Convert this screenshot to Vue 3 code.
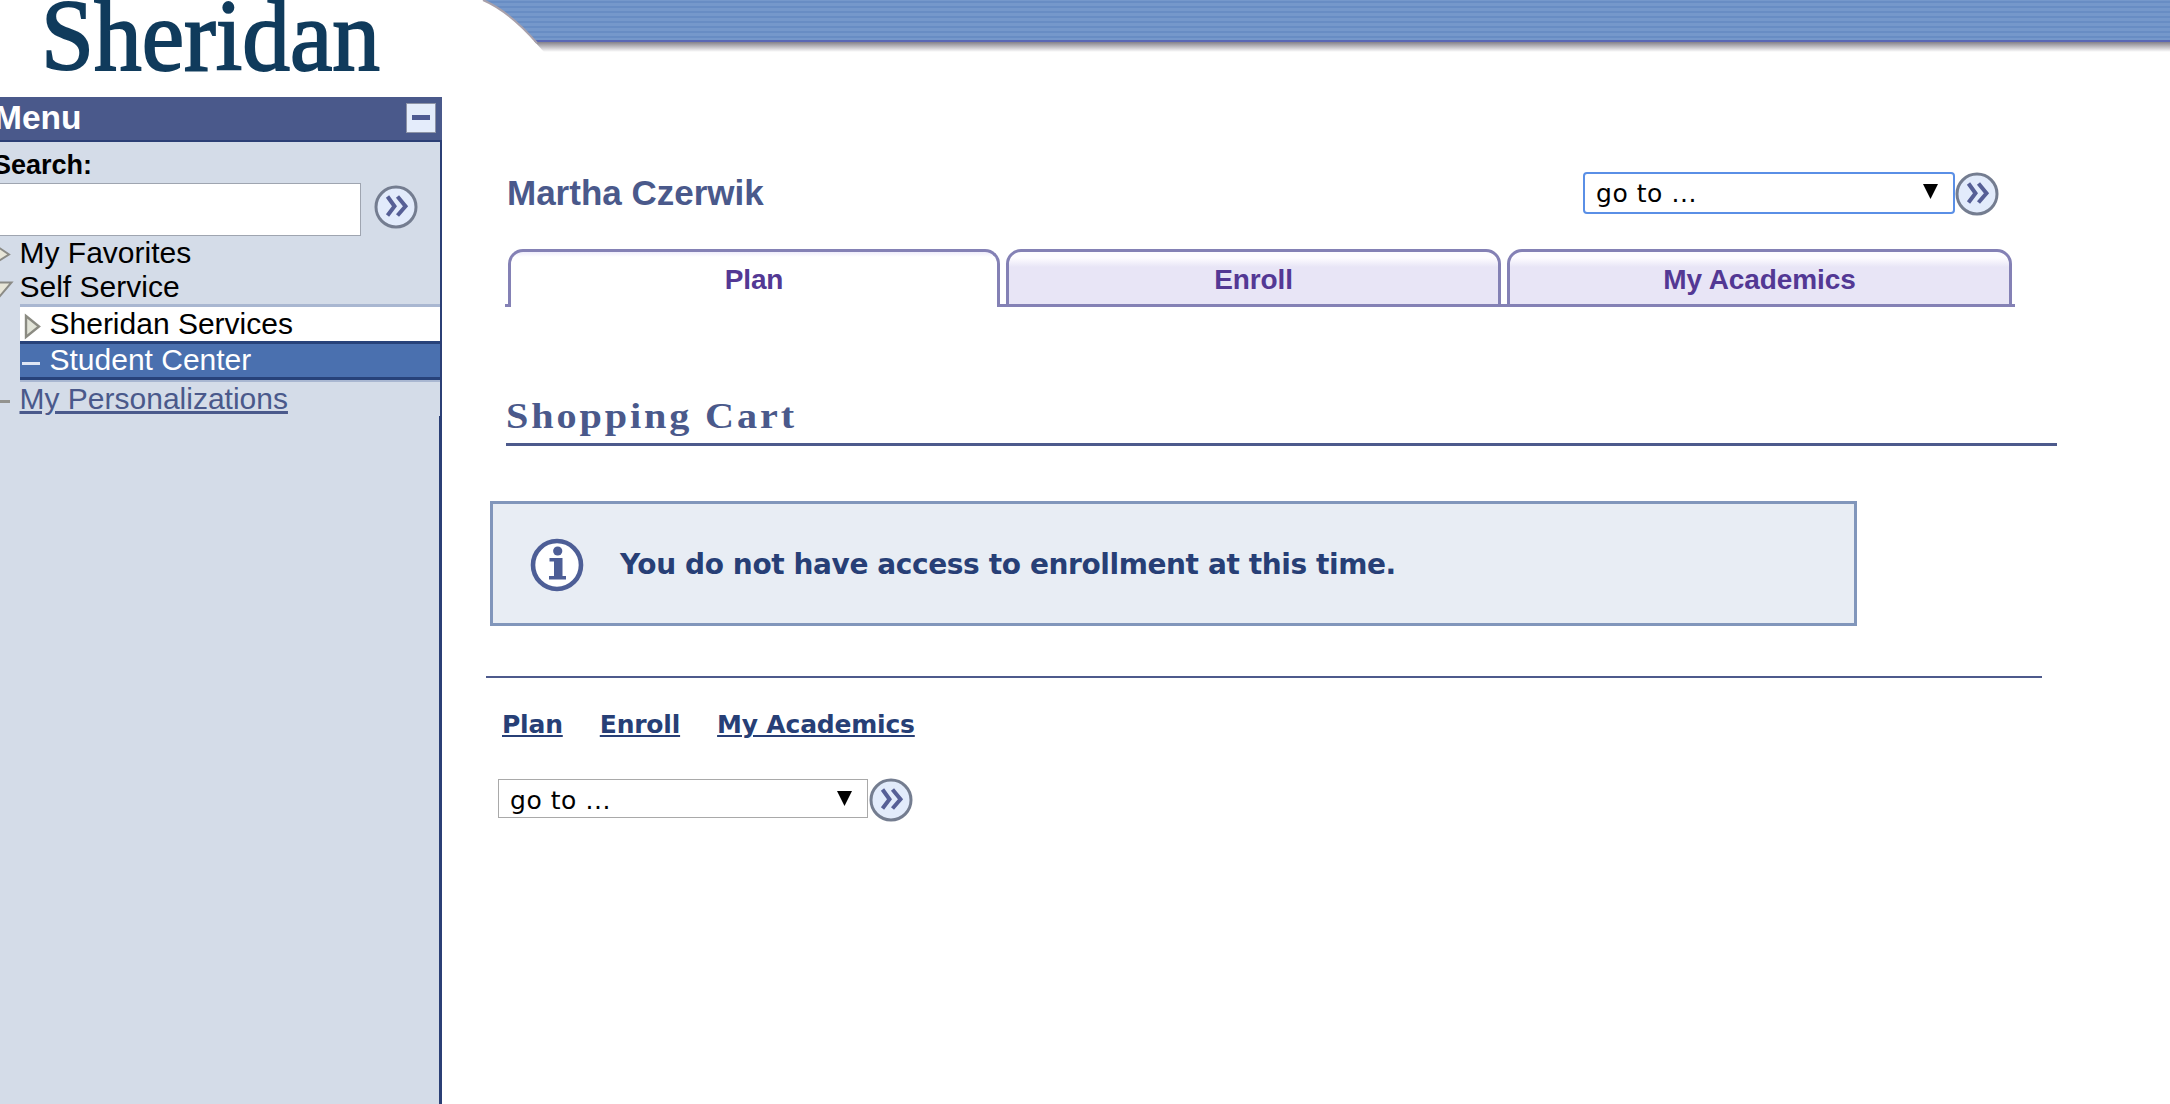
<script setup>
import { h } from 'vue'

const tabs = [
  { label: 'Plan', active: true, cls: 'plan' },
  { label: 'Enroll', active: false, cls: 'enroll' },
  { label: 'My Academics', active: false, cls: 'academics' }
]

const GoIcon = () =>
  h('svg', { viewBox: '0 0 44 44', width: 44, height: 44, style: 'display:block' }, [
    h('circle', { cx: 22, cy: 22, r: 20, fill: '#e2ebfb', stroke: '#747d90', 'stroke-width': 3 }),
    h('path', {
      d: 'M13.5 11.5 L20.5 21.3 L13.5 30.5 M23.5 11.5 L31.5 21.3 L23.5 30.5',
      fill: 'none', stroke: '#565f96', 'stroke-width': 4
    })
  ])
</script>

<template>
  <div class="page">
    <header class="top">
      <svg class="logo" width="442" height="97" viewBox="0 0 442 97">
        <text x="41" y="70" font-size="101" textLength="339" lengthAdjust="spacingAndGlyphs">Sheridan</text>
      </svg>
      <svg class="banner" width="1728" height="97" viewBox="442 0 1728 97">
        <defs>
          <pattern id="stripes" width="8" height="5" patternUnits="userSpaceOnUse">
            <rect width="8" height="5" fill="#7598cb" />
            <rect width="8" height="2" y="1" fill="#688dc4" />
          </pattern>
          <linearGradient id="shade" x1="0" y1="0" x2="0" y2="1">
            <stop offset="0" stop-color="#77747e" />
            <stop offset="1" stop-color="#ffffff" />
          </linearGradient>
        </defs>
        <path d="M534 41 H2170 V52 H544 Z" fill="url(#shade)" />
        <path d="M483 0 C504 9 522 26 536 42 H2170 V0 Z" fill="url(#stripes)" />
        <path d="M535 41 H2170" stroke="#5967b4" stroke-width="2" />
        <path d="M483 0 C504 9 522 26 537 43" fill="none" stroke="#a8a0aa" stroke-width="2" />
      </svg>
    </header>

    <div class="columns">
      <aside class="menu">
        <div class="menu-head">
          <span class="menu-title">Menu</span>
          <span class="collapse"><i></i></span>
        </div>
        <div class="menu-body">
          <div class="search-label">Search:</div>
          <div class="search-row">
            <div class="search-input"></div>
            <GoIcon />
          </div>
          <div class="item fav">
            <svg class="mark" width="20" height="34"><path d="M-8 7 L9 18.500 L-8 29 Z" fill="#e8e6d8" stroke="#8b8b86" stroke-width="2" /></svg>
            <span>My Favorites</span>
          </div>
          <div class="item self">
            <svg class="mark" width="20" height="34"><path d="M-12 12.500 H11.500 L0 26 Z" fill="#e8e6d8" stroke="#8b8b86" stroke-width="2" /></svg>
            <span>Self Service</span>
          </div>
          <div class="sub">
            <div class="item services">
              <svg class="mark" width="30" height="34"><path d="M6 9 L19 19.5 L6 30 Z" fill="#e2e4d8" stroke="#8b8b82" stroke-width="2.400" /></svg>
              <span>Sheridan Services</span>
            </div>
            <div class="item center">
              <svg class="mark" width="30" height="33"><path d="M2 19.500 H20" stroke="#dfe6f4" stroke-width="3" /></svg>
              <span>Student Center</span>
            </div>
          </div>
          <div class="item personal">
            <svg class="mark" width="20" height="34"><path d="M0 19.5 H10" stroke="#93938f" stroke-width="3" /></svg>
            <a>My Personalizations</a>
          </div>
        </div>
        <div class="menu-rest"></div>
      </aside>

      <main>
        <div class="name-row">
          <h1>Martha Czerwik</h1>
          <div class="goto">
            <div class="select focus"><span>go to ...</span><svg width="15" height="15"><path d="M0 0 H15 L7.5 15 Z" /></svg></div>
            <GoIcon />
          </div>
        </div>

        <nav class="tabs">
          <i class="stub"></i>
          <template v-for="(t, i) in tabs" :key="t.label">
            <i v-if="i" class="joint"></i>
            <div class="tab" :class="[t.cls, { active: t.active }]"><span>{{ t.label }}</span></div>
          </template>
          <i class="stub"></i>
        </nav>

        <h2>
          <svg width="300" height="50"><text x="0" y="35" font-size="35" textLength="291" lengthAdjust="spacingAndGlyphs">Shopping Cart</text></svg>
        </h2>

        <section class="notice">
          <svg width="56" height="56" viewBox="0 0 56 56">
            <circle cx="28" cy="28" r="24" fill="#fff" stroke="#4d5e96" stroke-width="4.6" />
            <circle cx="28.7" cy="14" r="4.6" fill="#4d5e96" />
            <path d="M20.500 21 H33.500 V39 H37 V42.5 H20 V39 H25 V24.500 H20.500 Z" fill="#4d5e96" />
          </svg>
          <span>You do not have access to enrollment at this time.</span>
        </section>

        <div class="rule"></div>

        <div class="links">
          <a>Plan</a><a>Enroll</a><a>My Academics</a>
        </div>

        <div class="goto bottom">
          <div class="select"><span>go to ...</span><svg width="15" height="15"><path d="M0 0 H15 L7.5 15 Z" /></svg></div>
          <GoIcon />
        </div>
      </main>
    </div>
  </div>
</template>

<style>
body { margin: 0; background: #fff; overflow: hidden; }
</style>

<style scoped>
* { box-sizing: border-box; }
.page {
  width: 2170px; height: 1104px; overflow: hidden; background: #fff;
  font-family: "Liberation Sans", Arial, sans-serif;
  display: flex; flex-direction: column;
}
.top { display: flex; height: 97px; flex: none; }
.logo text { font-family: "Liberation Serif", serif; fill: #103b5c; stroke: #103b5c; stroke-width: 2; }
.top svg { display: block; flex: none; }
.columns { display: flex; flex: 1; min-height: 0; }

.menu { width: 442px; flex: none; display: flex; flex-direction: column; background: #d4dce8; white-space: nowrap; overflow: hidden; }
.menu-head {
  height: 45px; flex: none; background: #4a598b; border-bottom: 2px solid #2b3f75;
  display: flex; justify-content: space-between; padding-right: 6px;
}
.menu-title { color: #fff; font-weight: bold; font-size: 33.500px; line-height: 42px; margin-left: -6px; }
.collapse {
  width: 30px; height: 30px; margin-top: 6px; background: #e4ecfb; border: 1px solid #8d93a6;
  display: flex; align-items: center; justify-content: center;
}
.collapse i { width: 18px; height: 5px; background: #4d5a92; margin-bottom: 2px; }
.menu-body { height: 274px; flex: none; border-right: 2px solid #2b3f75; display: flex; flex-direction: column; }
.menu-rest { flex: 1; border-right: 3px solid #2b3f75; }
.search-label { font-weight: bold; font-size: 27px; line-height: 30px; height: 41px; padding-top: 8px; margin-left: -7px; flex: none; }
.search-row { display: flex; align-items: center; gap: 13px; height: 53px; flex: none; }
.search-row svg { margin-top: -5px; }
.search-input { width: 361px; height: 53px; background: #fff; border: 1px solid #9fa5b0; border-left: 0; }
.item { display: flex; height: 34px; font-size: 30px; line-height: 34px; flex: none; }
.item span, .item a { margin-left: -0.500px; }
.mark { display: block; flex: none; }
.sub { margin-left: 20px; border-top: 3px solid #a9b7d1; border-bottom: 2px solid #a9b7d1; flex: none; }
.services { background: #fff; }
.center { background: #4a70af; color: #fff; height: 39px; border-top: 3px solid #27427a; border-bottom: 3px solid #27427a; line-height: 32px; }
.personal a { color: #4a598b; text-decoration: underline; text-decoration-thickness: 3px; text-underline-offset: 2px; }

main { flex: 1; display: flex; flex-direction: column; align-items: flex-start; min-width: 0; }
.name-row { display: flex; justify-content: space-between; width: 1493px; margin: 74px 0 0 64px; height: 46px; }
h1 { margin: 0; font-size: 35px; line-height: 43px; color: #4a598b; font-weight: bold; padding-left: 1px; }
.goto { display: flex; align-items: center; }
.select {
  display: flex; align-items: center; justify-content: space-between; font-family: "DejaVu Sans", sans-serif;
  font-size: 25px; letter-spacing: 0.55px; width: 370px; height: 39px; border: 1px solid #a9a9a9; padding: 3px 15px 0 11px; background: #fff;
  margin-bottom: 3px;
}
.select svg { margin-top: -4px; }
.select.focus { width: 372px; height: 42px; border: 2px solid #5a8fe6; border-radius: 4px; padding-top: 2px; }

.tabs { display: flex; align-items: flex-end; height: 58px; margin: 32px 0 0 63px; }
.stub, .joint { height: 3px; background: #8481b5; width: 3px; }
.joint { width: 6px; }
.tab {
  height: 58px; border: 3px solid #8481b5; border-radius: 15px 15px 0 0;
  background: linear-gradient(#fdfcff 6px, #e8e5f6 15px); color: #533894; font-weight: bold; font-size: 28px;
  line-height: 55px; text-align: center; letter-spacing: -0.1px;
}
.plan { width: 492px; }
.enroll { width: 495px; }
.academics { width: 505px; }
.tab.active { background: linear-gradient(#efedfb, #fff 5px); border-bottom: 0; }

h2 { margin: 86px 0 0 64px; width: 1551px; height: 53px; border-bottom: 3px solid #4d5a8c; }
h2 svg { display: block; }
h2 text { font-family: "Liberation Serif", serif; font-weight: bold; fill: #4a598b; letter-spacing: 2.5px; }
.notice {
  margin: 55px 0 0 48px; width: 1367px; height: 125px; border: 3px solid #8196bb; background: #e8edf4;
  display: flex; align-items: center; padding: 2px 0 0 36px; gap: 35px;
  font-family: "DejaVu Sans", sans-serif; font-weight: bold; font-size: 28px; letter-spacing: -0.4px; color: #273f76; white-space: nowrap;
}
.rule { margin: 50px 0 0 44px; width: 1556px; height: 2px; background: #4d5a8c; }
.links { margin: 30px 0 0 60px; display: flex; gap: 37px; height: 34px; line-height: 34px; font-family: "DejaVu Sans", sans-serif; font-weight: bold; font-size: 25px; letter-spacing: -0.2px; color: #273f76; }
.links a { text-decoration: underline; text-decoration-thickness: 2px; text-underline-offset: 2px; }
.bottom { margin: 36px 0 0 56px; height: 44px; }
.bottom .select { margin-right: 1px; }
</style>
